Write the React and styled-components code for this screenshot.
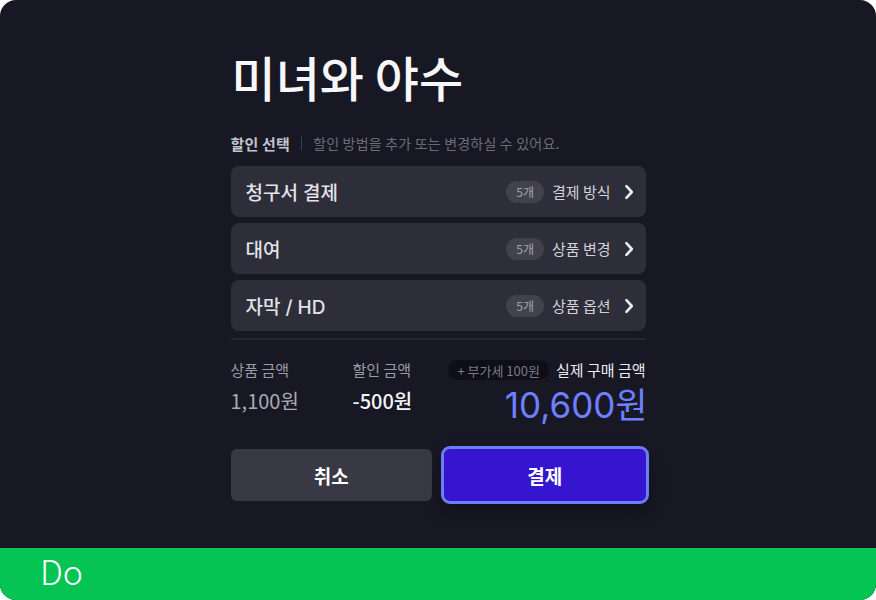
import React from "react";
import styled, { createGlobalStyle } from "styled-components";

const Global = createGlobalStyle`
  html, body { margin: 0; padding: 0; background: #ffffff; }
  body { font-family: "Inter", "Noto Sans CJK KR", sans-serif; }
  * { box-sizing: border-box; }
`;

const Frame = styled.div`
  width: 876px;
  height: 600px;
  border-radius: 16px;
  overflow: hidden;
  background: #181825;
  display: flex;
  flex-direction: column;
`;

const Stage = styled.div`
  flex: 1;
  display: flex;
  justify-content: center;
`;

const Column = styled.div`
  width: 415px;
  padding-top: 44px;
  display: flex;
  flex-direction: column;
`;

const Title = styled.h1`
  margin: 0;
  font-family: "Noto Sans CJK KR", sans-serif;
  font-size: 48px;
  font-weight: 500;
  line-height: 64px;
  color: #f7f7f9;
  padding-left: 1px;
`;

const SectionHead = styled.div`
  margin-top: 24px;
  display: flex;
  align-items: center;
  gap: 11px;
  height: 22px;
  font-family: "Noto Sans CJK KR", sans-serif;
  white-space: nowrap;
`;

const SectionLabel = styled.span`
  font-size: 15px;
  font-weight: 700;
  color: #c4c4cc;
  letter-spacing: 0.2px;
`;

const Sep = styled.span`
  width: 1px;
  height: 13px;
  background: #3f3f4a;
`;

const SectionDesc = styled.span`
  font-size: 14px;
  color: #6c6c78;
  letter-spacing: 0.2px;
`;

const Options = styled.div`
  margin-top: 12px;
  display: flex;
  flex-direction: column;
  gap: 6px;
`;

const OptionRow = styled.div`
  height: 51px;
  border-radius: 8px;
  background: #2e2e3b;
  display: flex;
  align-items: center;
  padding: 0 12px 0 15px;
  font-family: "Noto Sans CJK KR", sans-serif;
`;

const OptionName = styled.span`
  flex: 1;
  font-family: "Inter", "Noto Sans CJK KR", sans-serif;
  font-size: 19px;
  font-weight: 500;
  color: #e2e2e8;
`;

const CountBadge = styled.span`
  height: 22px;
  padding: 0 10px;
  border-radius: 11px;
  background: #42424d;
  color: #a3a3ad;
  font-size: 12px;
  display: inline-flex;
  align-items: center;
  margin-right: 8px;
`;

const OptionAction = styled.span`
  font-size: 15px;
  color: #d2d2d8;
  margin-right: 13px;
`;

const Chevron = () => (
  <svg width="10" height="16" viewBox="0 0 10 16" fill="none">
    <path d="M2.4 2.2 L7.8 8 L2.4 13.8" stroke="#ececf1" strokeWidth="2.6" strokeLinecap="round" strokeLinejoin="round" />
  </svg>
);

const Divider = styled.div`
  margin-top: 7px;
  height: 2px;
  background: #252532;
`;

const Prices = styled.div`
  margin-top: 19px;
  display: grid;
  grid-template-columns: 122px 88px 1fr;
  align-items: start;
`;

const PriceCol = styled.div`
  display: flex;
  flex-direction: column;
  gap: 8px;
  font-family: "Noto Sans CJK KR", sans-serif;
`;

const PriceLabel = styled.span`
  font-size: 15px;
  line-height: 22px;
  white-space: nowrap;
  color: ${(p) => (p.$bright ? "#ececf0" : "#9b9ba5")};
`;

const PriceValue = styled.span`
  font-family: "Noto Sans CJK KR", sans-serif;
  font-size: 20px;
  line-height: 24px;
  font-weight: ${(p) => (p.$strong ? 500 : 400)};
  color: ${(p) => (p.$strong ? "#f4f4f7" : "#a9a9b2")};
`;

const TotalCol = styled.div`
  display: flex;
  flex-direction: column;
  align-items: flex-end;
  font-family: "Noto Sans CJK KR", sans-serif;
`;

const TotalHead = styled.div`
  display: flex;
  align-items: center;
  gap: 7px;
  white-space: nowrap;
`;

const VatBadge = styled.span`
  height: 20px;
  padding: 0 9px;
  border-radius: 10px;
  background: #0e0e16;
  color: #7b7b86;
  font-size: 13px;
  display: inline-flex;
  align-items: center;
`;

const TotalValue = styled.span`
  margin-top: 2px;
  margin-right: -2px;
  font-family: "Inter", "Noto Sans CJK KR", sans-serif;
  font-size: 35px;
  line-height: 44px;
  font-weight: 400;
  color: #6e80ff;
`;

const Buttons = styled.div`
  margin-top: 22px;
  display: grid;
  grid-template-columns: 1fr 1fr;
  gap: 12px;
`;

const Btn = styled.button`
  height: 52px;
  border: none;
  border-radius: 6px;
  background: ${(p) => (p.$primary ? "#3515d0" : "#393945")};
  color: #ffffff;
  font-family: "Noto Sans CJK KR", sans-serif;
  font-size: 19px;
  font-weight: 700;
  outline: ${(p) => (p.$primary ? "3px solid #6b7ef6" : "none")};
  outline-offset: 0;
  box-shadow: ${(p) => (p.$primary ? "0 8px 18px rgba(0,0,0,0.45)" : "none")};
`;

const Footer = styled.div`
  height: 52px;
  background: #05c454;
  display: flex;
  align-items: center;
  padding: 0 0 6px 40px;
  font-family: "Noto Sans CJK KR", sans-serif;
  font-size: 34px;
  line-height: 40px;
  font-weight: 300;
  color: #ffffff;
`;

const options = [
  { name: "청구서 결제", action: "결제 방식" },
  { name: "대여", action: "상품 변경" },
  { name: "자막 / HD", action: "상품 옵션" },
];

export default function App() {
  return (
    <>
      <Global />
      <Frame>
        <Stage>
          <Column>
            <Title>미녀와 야수</Title>
            <SectionHead>
              <SectionLabel>할인 선택</SectionLabel>
              <Sep />
              <SectionDesc>할인 방법을 추가 또는 변경하실 수 있어요.</SectionDesc>
            </SectionHead>
            <Options>
              {options.map((o) => (
                <OptionRow key={o.name}>
                  <OptionName>{o.name}</OptionName>
                  <CountBadge>5개</CountBadge>
                  <OptionAction>{o.action}</OptionAction>
                  <Chevron />
                </OptionRow>
              ))}
            </Options>
            <Divider />
            <Prices>
              <PriceCol>
                <PriceLabel>상품 금액</PriceLabel>
                <PriceValue>1,100원</PriceValue>
              </PriceCol>
              <PriceCol>
                <PriceLabel>할인 금액</PriceLabel>
                <PriceValue $strong>-500원</PriceValue>
              </PriceCol>
              <TotalCol>
                <TotalHead>
                  <VatBadge>+ 부가세 100원</VatBadge>
                  <PriceLabel $bright>실제 구매 금액</PriceLabel>
                </TotalHead>
                <TotalValue>10,600원</TotalValue>
              </TotalCol>
            </Prices>
            <Buttons>
              <Btn>취소</Btn>
              <Btn $primary>결제</Btn>
            </Buttons>
          </Column>
        </Stage>
        <Footer>Do</Footer>
      </Frame>
    </>
  );
}
